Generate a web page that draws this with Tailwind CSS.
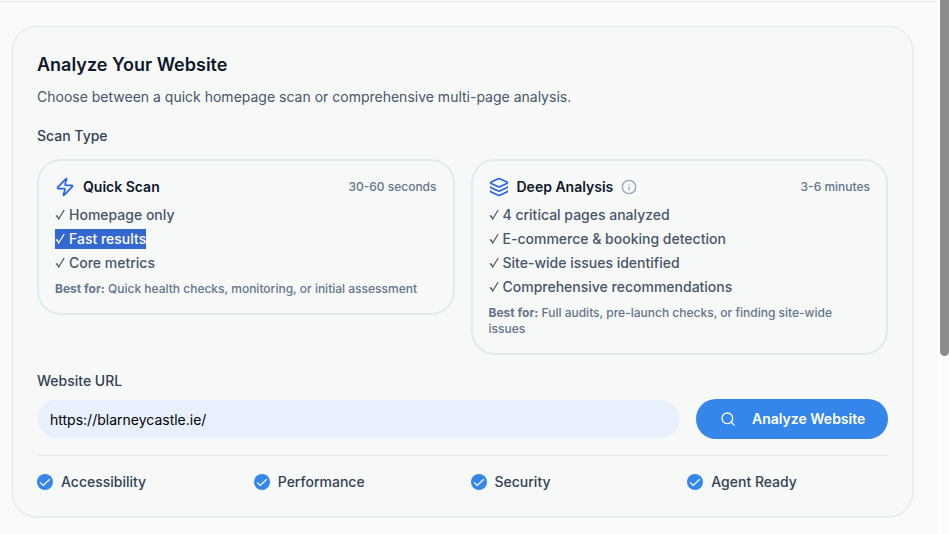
<!DOCTYPE html>
<html lang="en">
<head>
<meta charset="utf-8">
<meta name="viewport" content="width=device-width, initial-scale=1">
<title>Analyze Your Website</title>
<script src="https://cdn.jsdelivr.net/npm/@tailwindcss/browser@4"></script>
</head>
<body class="flex min-h-screen overflow-hidden bg-slate-50 font-['Inter',sans-serif] text-sm text-[#475569]">
<svg class="hidden" aria-hidden="true">
  <symbol id="tick" viewBox="0 0 10 12"><path d="M.8 7.4 2 6.8 3.6 10 9.2 1" fill="none" stroke="currentColor" stroke-width="1.2"/></symbol>
  <symbol id="badge" viewBox="0 0 16 16"><circle cx="8" cy="8" r="8" fill="#3486eb"/><path d="m3 8.4 3.2 3.1 6.6-6.3" fill="none" stroke="#fff" stroke-width="1.2"/></symbol>
</svg>
<div class="min-w-0 flex-1">
  <header class="h-[2px] border-b border-slate-200 bg-white"></header>
  <main class="pt-6 pr-6 pb-4 pl-3">
    <section class="rounded-3xl border border-[#e0eaef] bg-[#f7f9f9] p-6 shadow-xs">
      <h1 class="text-lg/7 font-semibold text-[#0f172a]">Analyze Your Website</h1>
      <p class="mt-2 leading-5">Choose between a quick homepage scan or comprehensive multi-page analysis.</p>
      <form>
        <fieldset class="mt-5">
          <legend class="mb-3.5 leading-[18px] font-medium text-[#334155]">Scan Type</legend>
          <div class="grid grid-cols-2 items-start gap-4">
            <label class="relative block rounded-3xl border-2 border-[#e0eaef] p-4 font-medium">
              <input type="radio" name="scan" class="sr-only">
              <span class="flex items-center gap-2">
                <svg class="size-5 text-[#2563eb]" viewBox="0 0 24 24" fill="none" stroke="currentColor" stroke-width="2" stroke-linecap="round" stroke-linejoin="round" aria-hidden="true"><path d="M4 14a1 1 0 0 1-.78-1.63l9.9-10.2a.5.5 0 0 1 .86.46l-1.92 6.02A1 1 0 0 0 13 10h7a1 1 0 0 1 .78 1.63l-9.9 10.2a.5.5 0 0 1-.86-.46l1.92-6.02A1 1 0 0 0 11 14z"/></svg>
                <span class="font-semibold text-[#0f172a]">Quick Scan</span>
                <span class="ml-auto text-xs text-[#64748b]">30-60 seconds</span>
              </span>
              <span class="mt-2 flex flex-col items-start gap-1 leading-5">
                <span class="flex items-center gap-1"><svg class="h-3 w-2.5" aria-hidden="true"><use href="#tick"/></svg>Homepage only</span>
                <span class="flex items-center gap-1 bg-[#3367d1] text-white"><svg class="h-3 w-2.5" aria-hidden="true"><use href="#tick"/></svg>Fast results</span>
                <span class="flex items-center gap-1"><svg class="h-3 w-2.5" aria-hidden="true"><use href="#tick"/></svg>Core metrics</span>
              </span>
              <span class="mt-2 block text-xs/4 text-[#64748b]"><strong class="font-bold">Best for:</strong> Quick health checks, monitoring, or initial assessment</span>
            </label>
            <label class="relative block rounded-3xl border-2 border-[#e0eaef] p-4 font-medium">
              <input type="radio" name="scan" class="sr-only">
              <span class="flex items-center gap-2">
                <svg class="size-5 text-[#2563eb]" viewBox="0 0 24 24" fill="none" stroke="currentColor" stroke-width="2" stroke-linecap="round" stroke-linejoin="round" aria-hidden="true"><path d="M12.83 2.18a2 2 0 0 0-1.66 0L2.6 6.08a1 1 0 0 0 0 1.83l8.58 3.91a2 2 0 0 0 1.66 0l8.58-3.9a1 1 0 0 0 0-1.83z"/><path d="M2 12a1 1 0 0 0 .58.91l8.6 3.91a2 2 0 0 0 1.65 0l8.58-3.9A1 1 0 0 0 22 12"/><path d="M2 17a1 1 0 0 0 .58.91l8.6 3.91a2 2 0 0 0 1.65 0l8.58-3.9A1 1 0 0 0 22 17"/></svg>
                <span class="font-semibold text-[#0f172a]">Deep Analysis</span>
                <svg class="size-4 text-[#94a3b8]" viewBox="0 0 24 24" fill="none" stroke="currentColor" stroke-width="2" stroke-linecap="round" stroke-linejoin="round" role="img" aria-label="More information"><circle cx="12" cy="12" r="10"/><path d="M12 16v-4M12 8h.01"/></svg>
                <span class="ml-auto text-xs text-[#64748b]">3-6 minutes</span>
              </span>
              <span class="mt-2 flex flex-col items-start gap-1 leading-5">
                <span class="flex items-center gap-1"><svg class="h-3 w-2.5" aria-hidden="true"><use href="#tick"/></svg>4 critical pages analyzed</span>
                <span class="flex items-center gap-1"><svg class="h-3 w-2.5" aria-hidden="true"><use href="#tick"/></svg>E-commerce &amp; booking detection</span>
                <span class="flex items-center gap-1"><svg class="h-3 w-2.5" aria-hidden="true"><use href="#tick"/></svg>Site-wide issues identified</span>
                <span class="flex items-center gap-1"><svg class="h-3 w-2.5" aria-hidden="true"><use href="#tick"/></svg>Comprehensive recommendations</span>
              </span>
              <span class="mt-2 block text-xs/4 text-[#64748b]"><strong class="font-bold">Best for:</strong> Full audits, pre-launch checks, or finding site-wide issues</span>
            </label>
          </div>
        </fieldset>
        <label for="url" class="mt-4 block leading-5 font-medium text-[#334155]">Website URL</label>
        <div class="mt-2 flex gap-4">
          <input id="url" type="url" value="https://blarneycastle.ie/" class="h-10 min-w-0 flex-1 rounded-3xl border border-[#f5f7fa] bg-[#e8f0fe] px-3 text-black">
          <button type="button" class="flex h-10 w-48 items-center gap-4 rounded-3xl bg-[#3486eb] pl-6 font-semibold whitespace-nowrap text-white">
            <svg class="size-4 shrink-0" viewBox="0 0 24 24" fill="none" stroke="currentColor" stroke-width="2" stroke-linecap="round" stroke-linejoin="round" aria-hidden="true"><circle cx="11" cy="11" r="8"/><path d="m21 21-4.3-4.3"/></svg>
            Analyze Website
          </button>
        </div>
      </form>
      <ul class="mt-4 grid grid-cols-4 gap-4 border-t border-slate-200 pt-4 leading-5 font-medium text-[#334155]">
        <li class="flex items-center gap-2"><svg class="size-4" aria-hidden="true"><use href="#badge"/></svg>Accessibility</li>
        <li class="flex items-center gap-2"><svg class="size-4" aria-hidden="true"><use href="#badge"/></svg>Performance</li>
        <li class="flex items-center gap-2"><svg class="size-4" aria-hidden="true"><use href="#badge"/></svg>Security</li>
        <li class="flex items-center gap-2"><svg class="size-4" aria-hidden="true"><use href="#badge"/></svg>Agent Ready</li>
      </ul>
    </section>
  </main>
</div>
<div class="w-3 bg-[#fcfcfc] pl-[3px]" aria-hidden="true"><div class="h-[356px] rounded-b-md bg-[#8b8b8b]"></div></div>
</body>
</html>
